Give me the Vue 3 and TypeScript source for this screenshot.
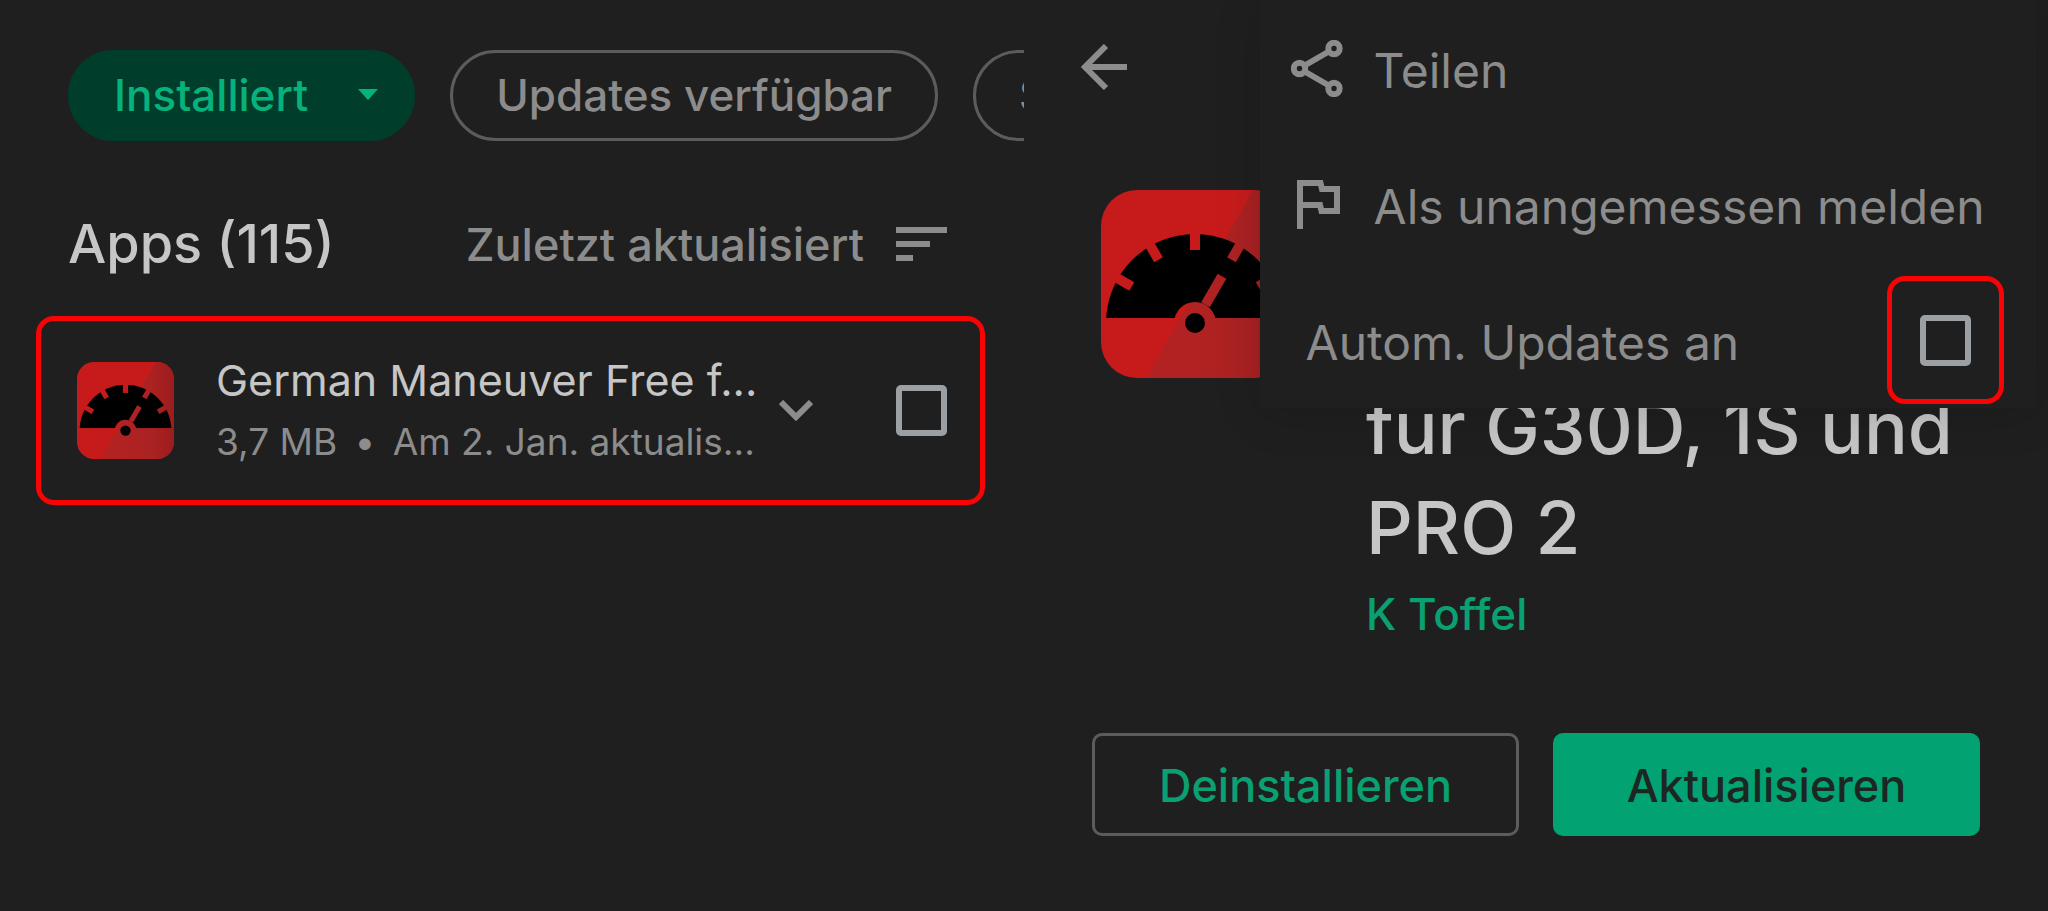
<script setup lang="ts">
import { ref } from 'vue'

interface Chip {
  label: string
  active: boolean
}

const chips: Chip[] = [
  { label: 'Installiert', active: true },
  { label: 'Updates verfügbar', active: false },
  { label: 'S', active: false },
]

const appSelected = ref(false)
const autoUpdate = ref(false)
</script>

<template>
  <div class="screen">
    <svg class="sprite" aria-hidden="true">
      <defs>
        <linearGradient id="shade" x1="0" y1="0" x2="1" y2="0">
          <stop offset="0.25" stop-color="#b32222" />
          <stop offset="0.7" stop-color="#ab2222" />
          <stop offset="1" stop-color="#9c1c1c" />
        </linearGradient>
        <mask id="dial" maskUnits="userSpaceOnUse" x="0" y="0" width="188" height="188">
          <rect width="188" height="128" fill="#fff" />
          <circle cx="94" cy="133" r="21" fill="#000" />
          <g stroke="#000" stroke-width="10">
            <path d="M94 112V79" transform="rotate(30 94 133)" />
            <path d="M94 60V38" transform="rotate(-60 94 133)" />
            <path d="M94 60V38" transform="rotate(-30 94 133)" />
            <path d="M94 60V38" />
            <path d="M94 60V38" transform="rotate(30 94 133)" />
            <path d="M94 60V38" transform="rotate(60 94 133)" />
          </g>
        </mask>
      </defs>
      <symbol id="gauge" viewBox="0 0 188 188">
        <rect width="188" height="188" fill="#c71b1b" />
        <path d="M152 0H188V188H45Z" fill="url(#shade)" />
        <circle cx="94" cy="133" r="89" mask="url(#dial)" />
        <circle cx="94" cy="133" r="10" />
      </symbol>
    </svg>

    <section class="pane list-pane">
      <div class="chips">
        <button
          v-for="chip in chips"
          :key="chip.label"
          type="button"
          class="chip"
          :class="{ active: chip.active }"
        >
          {{ chip.label }}
          <svg v-if="chip.active" class="caret" viewBox="0 0 20 11" aria-hidden="true">
            <path d="M0 0H20L10 11Z" />
          </svg>
        </button>
      </div>

      <div class="list-head">
        <h2>Apps (115)</h2>
        <button type="button" class="sort">
          Zuletzt aktualisiert
          <svg class="sort-icon" viewBox="0 0 51 34" aria-hidden="true">
            <path d="M0 0H51V6H0ZM0 14H34V20H0ZM0 28H17V34H0Z" />
          </svg>
        </button>
      </div>

      <article class="app-row">
        <svg class="app-icon small" aria-hidden="true"><use href="#gauge" /></svg>
        <div class="app-text">
          <h3>German Maneuver Free f...</h3>
          <p>3,7 MB <span class="dot">•</span> Am 2. Jan. aktualis...</p>
        </div>
        <button type="button" class="expand" aria-label="Details">
          <svg viewBox="0 0 34 21" aria-hidden="true">
            <path d="M2 2L17 17L32 2" />
          </svg>
        </button>
        <input v-model="appSelected" type="checkbox" class="box" aria-label="German Maneuver" />
      </article>
    </section>

    <section class="pane detail-pane">
      <button type="button" class="back" aria-label="Zurück">
        <svg viewBox="0 0 46 46" aria-hidden="true">
          <path d="M46 23H5M25 2L4 23L25 44" />
        </svg>
      </button>

      <header class="detail-head">
        <svg class="app-icon large" aria-hidden="true"><use href="#gauge" /></svg>
        <div class="detail-text">
          <h1>für G30D, 1S und PRO 2</h1>
          <a href="#" class="developer">K Toffel</a>
        </div>
      </header>

      <div class="actions">
        <button type="button" class="action outline">Deinstallieren</button>
        <button type="button" class="action solid">Aktualisieren</button>
      </div>

      <div class="menu">
        <button type="button" class="menu-item">
          <svg class="menu-icon" viewBox="0 0 52 57" aria-hidden="true">
            <path d="M8.500 28.500L43 8.500M8.500 28.500L43 48.500" />
            <g class="node">
              <circle cx="8.500" cy="28.500" r="5.700" />
              <circle cx="43" cy="8.500" r="5.700" />
              <circle cx="43" cy="48.500" r="5.700" />
            </g>
          </svg>
          <span class="menu-label">Teilen</span>
        </button>
        <button type="button" class="menu-item">
          <svg class="menu-icon" viewBox="0 0 52 57" aria-hidden="true">
            <path d="M9 53V7H29.500L31 13H46V35H30.500L29 29H9" />
          </svg>
          <span class="menu-label">Als unangemessen melden</span>
        </button>
        <div class="menu-item toggle">
          <label class="menu-label" for="auto-update">Autom. Updates an</label>
          <span class="marker">
            <input id="auto-update" v-model="autoUpdate" type="checkbox" class="box" />
          </span>
        </div>
      </div>
    </section>
  </div>
</template>

<style>
body {
  margin: 0;
  background: #1f1f1f;
}
</style>

<style scoped>
.screen {
  display: grid;
  grid-template-columns: minmax(0, 1fr) minmax(0, 1fr);
  min-height: 100vh;
  background: #1f1f1f;
  color: #8c8c8c;
  font-family: Inter, Roboto, "Liberation Sans", sans-serif;
  font-size: 44px;
}

.sprite {
  position: absolute;
  width: 0;
  height: 0;
}

h1,
h2,
h3,
p {
  margin: 0;
  font-weight: 400;
}

button {
  padding: 0;
  border: 0;
  background: none;
  color: inherit;
  font: inherit;
  white-space: nowrap;
  cursor: pointer;
}

.pane {
  position: relative;
  box-sizing: border-box;
  min-width: 0;
  overflow: hidden;
}

.list-pane {
  padding-top: 50px;
}

.chips {
  display: flex;
  gap: 35px;
  padding-left: 68px;
}

.chip {
  display: flex;
  flex: none;
  align-items: center;
  box-sizing: border-box;
  height: 91px;
  padding: 0 43px 2px;
  border: 3px solid #5c5c5c;
  border-radius: 46px;
  font-size: 44px;
  font-weight: 500;
}

.chip.active {
  gap: 50px;
  padding-right: 34px;
  border-color: #003d2b;
  background: #003d2b;
  color: #06b27c;
}

.caret {
  width: 20px;
  height: 11px;
  fill: currentColor;
}

.list-head {
  display: flex;
  align-items: center;
  justify-content: space-between;
  margin-top: 67px;
  padding: 0 77px 0 68px;
}

h2 {
  color: #c6c6c6;
  font-size: 54px;
  font-weight: 500;
  line-height: 72px;
}

.sort {
  display: flex;
  align-items: center;
  gap: 32px;
  font-size: 45px;
  font-weight: 500;
}

.sort-icon {
  width: 51px;
  height: 34px;
  fill: currentColor;
}

.app-row {
  display: flex;
  align-items: center;
  box-sizing: border-box;
  height: 189px;
  margin: 36px 39px 0 36px;
  padding: 0 33px 0 36px;
  border: 5px solid #f80404;
  border-radius: 18px;
}

.app-icon {
  flex: none;
}

.small {
  width: 97px;
  height: 97px;
  border-radius: 17px;
}

.large {
  width: 188px;
  height: 188px;
  border-radius: 36px;
}

.app-text {
  flex: 1;
  min-width: 0;
  margin-left: 42px;
  white-space: nowrap;
}

h3 {
  color: #c6c6c6;
  font-size: 43px;
  line-height: 62px;
}

p {
  font-size: 37px;
  line-height: 62px;
}

.dot {
  margin: 0 7px;
}

.expand {
  display: flex;
  margin-right: 83px;
}

.expand svg {
  width: 34px;
  height: 21px;
  fill: none;
  stroke: currentColor;
  stroke-width: 6px;
}

.box {
  flex: none;
  appearance: none;
  box-sizing: border-box;
  width: 51px;
  height: 51px;
  margin: 0;
  border: 6px solid #9aa0a4;
  border-radius: 5px;
  cursor: pointer;
}

.box:checked {
  background: #06b27c;
}

.detail-pane {
  padding: 44px 68px 0;
}

.back {
  display: flex;
  margin-left: -11px;
}

.back svg {
  width: 46px;
  height: 46px;
  fill: none;
  stroke: currentColor;
  stroke-width: 6px;
}

.detail-head {
  display: flex;
  gap: 77px;
  margin: 100px 0 0 9px;
}

.detail-text {
  padding-top: 188px;
}

h1 {
  color: #c6c6c6;
  font-size: 73px;
  font-weight: 500;
  line-height: 100px;
}

.developer {
  display: block;
  margin-top: 6px;
  color: #0aa071;
  font-size: 44px;
  font-weight: 500;
  line-height: 60px;
  text-decoration: none;
}

.actions {
  display: grid;
  grid-template-columns: 1fr 1fr;
  gap: 34px;
  margin-top: 89px;
}

.action {
  box-sizing: border-box;
  height: 103px;
  padding-top: 2px;
  border-radius: 10px;
  font-size: 45px;
  font-weight: 500;
}

.outline {
  border: 3px solid #5c5c5c;
  color: #0aa071;
}

.solid {
  background: #02a272;
  color: #1c2623;
}

.menu {
  position: absolute;
  top: 0;
  right: 12px;
  left: 23%;
  background: #1f1f1f;
  box-shadow: 0 6px 44px rgba(0, 0, 0, 0.14);
}

.menu-item {
  display: flex;
  align-items: center;
  gap: 31px;
  width: 100%;
  height: 136px;
  padding-left: 31px;
}

.menu-icon {
  width: 52px;
  height: 57px;
  fill: none;
  stroke: currentColor;
  stroke-width: 6px;
}

.node {
  fill: #1f1f1f;
}

.menu-label {
  padding-top: 6px;
  font-size: 48px;
  line-height: 60px;
}

.toggle {
  box-sizing: border-box;
  justify-content: space-between;
  padding: 0 32px 0 46px;
}

.marker {
  display: grid;
  place-items: center;
  box-sizing: border-box;
  width: 117px;
  height: 128px;
  border: 5px solid #f80404;
  border-radius: 18px;
}
</style>
